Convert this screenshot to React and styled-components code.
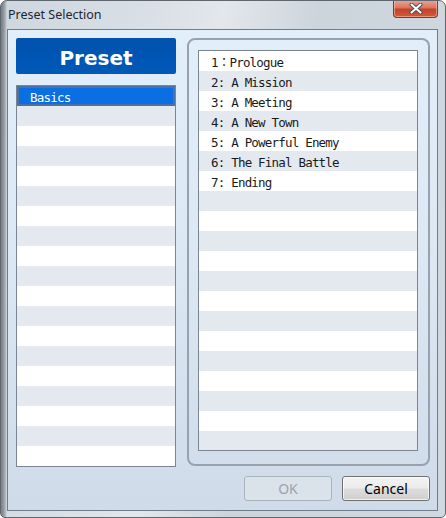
import React from "react";
import styled, { createGlobalStyle } from "styled-components";

const GlobalStyle = createGlobalStyle`
  html, body {
    margin: 0;
    padding: 0;
    background: #ffffff;
  }
`;

const Window = styled.div`
  width: 446px;
  height: 518px;
  box-sizing: border-box;
  display: flex;
  flex-direction: column;
  border: 1px solid #5f666e;
  border-radius: 7px 7px 5px 5px;
  background:
    linear-gradient(90deg, rgba(70, 76, 84, 0.6) 1px, rgba(110, 116, 124, 0.45) 4px, rgba(255, 255, 255, 0) 6px),
    linear-gradient(100deg, #cfd6de 0%, #d9dfe6 28%, #e3e7ec 42%, #ccd4dc 60%, #d0d8e1 100%);
  overflow: hidden;
`;

const TitleBar = styled.div`
  height: 28px;
  flex-shrink: 0;
  display: flex;
  align-items: flex-start;
  justify-content: space-between;
  padding: 0 7px 0 7px;
`;

const Title = styled.div`
  margin-top: 6px;
  font-family: "Noto Sans", "Liberation Sans", sans-serif;
  font-size: 12.5px;
  color: #1b2633;
  line-height: 16px;
`;

const CloseButton = styled.div`
  width: 45px;
  height: 18px;
  margin-top: -1px;
  display: flex;
  align-items: center;
  justify-content: center;
  border: 1px solid #7a3a30;
  border-top: none;
  border-radius: 0 0 4px 4px;
  box-sizing: border-box;
  background: linear-gradient(180deg, #e9a896 0%, #d9765f 45%, #c4432b 55%, #cf5a3c 100%);
  box-shadow: inset 0 0 0 1px rgba(255, 210, 190, 0.5);
`;

const Client = styled.div`
  flex: 1;
  margin: 0 7px 6px 6px;
  border: 1px solid #6f7c8c;
  background: linear-gradient(180deg, #e3eefb 0%, #dde8f5 45%, #cfdbe8 100%);
  display: flex;
  flex-direction: column;
  padding: 8px 6px 8px 8px;
  gap: 9px;
`;

const Main = styled.div`
  display: grid;
  grid-template-columns: 160px 243px;
  column-gap: 11px;
  height: 429px;
`;

const LeftColumn = styled.div`
  display: flex;
  flex-direction: column;
  gap: 11px;
`;

const PresetHeader = styled.div`
  height: 36px;
  flex-shrink: 0;
  background: linear-gradient(180deg, #0052ad 0%, #0059b8 100%);
  border-radius: 2px;
  display: flex;
  align-items: center;
  justify-content: center;
  color: #ffffff;
  font-family: "DejaVu Sans", "Noto Sans", sans-serif;
  font-weight: bold;
  font-size: 20px;
  padding-top: 3px;
  box-sizing: border-box;
`;

const List = styled.div`
  flex: 1;
  border: 1px solid #7b8591;
  background: #ffffff;
  overflow: hidden;
  display: flex;
  flex-direction: column;
`;

const Row = styled.div`
  height: 20px;
  flex-shrink: 0;
  box-sizing: border-box;
  padding-left: ${p => p.$indent}px;
  padding-top: 4px;
  font-family: "DejaVu Sans Mono", "Noto Sans CJK JP", monospace;
  font-size: 12.5px;
  line-height: 15px;
  letter-spacing: -0.8px;
  white-space: pre;
  overflow: hidden;
  color: ${p => (p.$selected ? "#ffffff" : "#1a1a1a")};
  background: ${p => (p.$selected ? "#0b6fe4" : p.$odd ? "#e3e9ef" : "#ffffff")};
  box-shadow: ${p => (p.$selected ? "inset 0 0 0 2px #4b72a3" : "none")};
`;

const Group = styled.div`
  border: 2px solid #98a2ae;
  border-radius: 8px;
  padding: 10px 10px 13px 9px;
  display: flex;
  flex-direction: column;
  height: 428px;
  box-sizing: border-box;
`;

const ButtonRow = styled.div`
  display: flex;
  justify-content: flex-end;
  gap: 10px;
  padding-right: 1px;
`;

const Button = styled.div`
  width: 88px;
  height: 25px;
  box-sizing: border-box;
  border-radius: 3px;
  display: flex;
  align-items: center;
  justify-content: center;
  font-family: "Noto Sans", "Liberation Sans", sans-serif;
  font-size: 14px;
  border: 1px solid ${p => (p.$disabled ? "#aab4be" : "#707070")};
  color: ${p => (p.$disabled ? "#9aa3ab" : "#000000")};
  background: ${p =>
    p.$disabled
      ? "#dae2ea"
      : "linear-gradient(180deg, #f3f3f3 0%, #ebebeb 48%, #dddddd 52%, #cfcfcf 100%)"};
  box-shadow: ${p => (p.$disabled ? "none" : "inset 0 0 0 1px rgba(255,255,255,0.7)")};
`;

const chapters = [
  "1：Prologue",
  "2: A Mission",
  "3: A Meeting",
  "4: A New Town",
  "5: A Powerful Enemy",
  "6: The Final Battle",
  "7: Ending"
];

function CloseIcon() {
  return (
    <svg width="14" height="11" viewBox="0 0 14 11">
      <path d="M2.5 1.5 L11.5 9.5 M11.5 1.5 L2.5 9.5" stroke="#4a4f57" strokeWidth="4" strokeLinecap="round" />
      <path d="M2.5 1.5 L11.5 9.5 M11.5 1.5 L2.5 9.5" stroke="#ffffff" strokeWidth="2" strokeLinecap="round" />
    </svg>
  );
}

export default function App() {
  const presetRows = Array.from({ length: 19 }, (_, i) => (i === 0 ? "Basics" : ""));
  const chapterRows = Array.from({ length: 20 }, (_, i) => chapters[i] || "");

  return (
    <>
      <GlobalStyle />
      <Window>
        <TitleBar>
          <Title>Preset Selection</Title>
          <CloseButton>
            <CloseIcon />
          </CloseButton>
        </TitleBar>
        <Client>
          <Main>
            <LeftColumn>
              <PresetHeader>Preset</PresetHeader>
              <List>
                {presetRows.map((text, i) => (
                  <Row key={i} $indent={13} $odd={i % 2 === 1} $selected={i === 0}>
                    {text}
                  </Row>
                ))}
              </List>
            </LeftColumn>
            <Group>
              <List>
                {chapterRows.map((text, i) => (
                  <Row key={i} $indent={12} $odd={i % 2 === 1}>
                    {text}
                  </Row>
                ))}
              </List>
            </Group>
          </Main>
          <ButtonRow>
            <Button $disabled>OK</Button>
            <Button>Cancel</Button>
          </ButtonRow>
        </Client>
      </Window>
    </>
  );
}
